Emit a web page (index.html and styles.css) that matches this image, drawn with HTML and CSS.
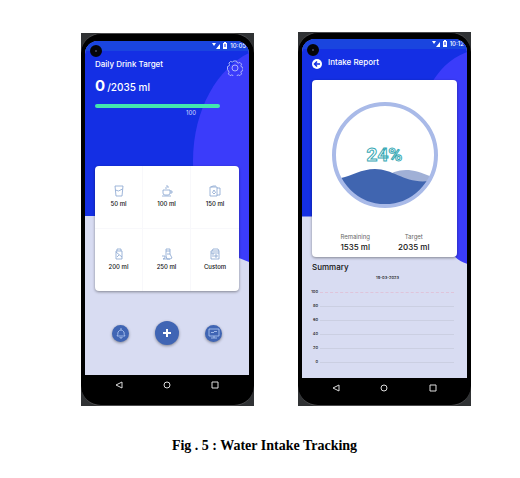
FILE: index.html
```html
<!DOCTYPE html>
<html lang="en">
<head>
<meta charset="utf-8">
<title>Water Intake Tracking</title>
<link rel="stylesheet" href="styles.css">
</head>
<body>
<figure class="figure">
  <div class="phones">
    <section class="phone phone-home">
      <div class="body">
        <span class="camera"></span>
        <div class="screen">
          <svg class="backdrop" viewBox="0 0 164 334" preserveAspectRatio="none" aria-hidden="true">
            <path d="M0 0H164V175H0Z" fill="#142fe4"/>
            <path d="M164 12C133 27 108 68 108 120C108 172 125 205 154 217L164 221Z" fill="#3b3cfa"/>
          </svg>
          <div class="status">
            <svg class="status-icons" viewBox="0 0 16 8" aria-hidden="true"><path d="M0 1H4L2 4ZM8 2V7H4ZM11 1h4v6h-4zM12 0h2v1h-2z" fill="#fff"/><path d="M13 2v3" stroke="#142fe4"/></svg>
            <span>10:05</span>
          </div>
          <header class="head">
            <h1 class="title">Daily Drink Target</h1>
            <button class="gear" aria-label="Settings">
              <svg viewBox="0 0 16 16" fill="none" stroke="#aab2fb"><path d="M6.500 1h3l.5 1.500 1.300.6 1.600-.7 1.700 1.700-.7 1.600.6 1.300 1.500.5v3l-1.500.5-.6 1.300.7 1.600-1.700 1.700-1.600-.7-1.300.6-.5 1.500h-3l-.5-1.500-1.300-.6-1.600.7-1.700-1.700.7-1.600-.6-1.300L.5 9.500v-3l1.500-.5.6-1.300-.7-1.600 1.700-1.700 1.600.7 1.300-.6z"/><circle cx="8" cy="8" r="3"/></svg>
            </button>
          </header>
          <p class="amount"><b>0</b>/2035 ml</p>
          <div class="track"></div>
          <p class="track-value">100</p>
          <div class="card drinks">
            <button class="drink"><svg viewBox="0 0 12 12"><path d="M2 1h8l-1 10H3zM2.500 5l3 1 4-2"/></svg>50 ml</button>
            <button class="drink"><svg viewBox="0 0 12 12"><path d="M2 5h7v3q0 2-2 2H4q-2 0-2-2zM9 6h2v2H9M1 11h9M5 4V2M7 3V1L5 1"/></svg>100 ml</button>
            <button class="drink"><svg viewBox="0 0 12 12"><path d="M1 2h7v9H1zM8 3h3v7H8M2 2l2-1h3M5 5q-3 3 0 4q3-1 0-4"/></svg>150 ml</button>
            <button class="drink"><svg viewBox="0 0 12 12"><path d="M3 3h6v8H3zM4 3V1h4v2M3 4l6 5M4 9l2-2"/></svg>200 ml</button>
            <button class="drink"><svg viewBox="0 0 12 12"><path d="M5 1h4v5l2 4-2 1H6L5 8zM5 3h4M1 8h3v2l-2 1M2 11h7M6 6h3"/></svg>250 ml</button>
            <button class="drink"><svg viewBox="0 0 12 12"><path d="M2 3h8v8H2zM3 3l1-2h5l1 2M4 5v4M2 5h8M6 7h2v2H6z"/></svg>Custom</button>
          </div>
          <div class="actions">
            <button class="round" aria-label="Reminders"><svg viewBox="0 0 12 12"><path d="M2 9q1-1 1-4q3-4 6 0q0 3 1 4zM6 3V1M5 10v1h2v-1"/></svg></button>
            <button class="round add" aria-label="Add drink"><svg viewBox="0 0 12 12"><path d="M6 2v8M2 6h8"/></svg></button>
            <button class="round" aria-label="Report"><svg viewBox="0 0 12 12"><path d="M1 2h10v7H1zM6 9v2M3 11h6M3 6l1-1 1 1 2-2 1 1 1-1"/></svg></button>
          </div>
        </div>
        <nav class="nav">
          <button aria-label="Back"><svg viewBox="0 0 8 8"><path d="M7 1v6L1 4z"/></svg></button>
          <button aria-label="Home"><svg viewBox="0 0 8 8"><circle cx="4" cy="4" r="3"/></svg></button>
          <button aria-label="Recent"><svg viewBox="0 0 8 8"><path d="M1 1h6v6H1z"/></svg></button>
        </nav>
      </div>
    </section>

    <section class="phone phone-report">
      <div class="body">
        <span class="camera"></span>
        <div class="screen">
          <svg class="backdrop" viewBox="0 0 164 338" preserveAspectRatio="none" aria-hidden="true">
            <path d="M0 0H164V177H0Z" fill="#142fe4"/>
            <path d="M164 13C145 20 136 33 130 42C100 90 100 180 152 217Q157 222 164 224Z" fill="#3b3cfa"/>
          </svg>
          <div class="status">
            <svg class="status-icons" viewBox="0 0 16 8" aria-hidden="true"><path d="M0 1H4L2 4ZM8 2V7H4ZM11 1h4v6h-4zM12 0h2v1h-2z" fill="#fff"/><path d="M13 2v3" stroke="#142fe4"/></svg>
            <span>10:12</span>
          </div>
          <header class="head">
            <button class="back" aria-label="Back"><svg viewBox="0 0 10 10"><circle cx="5" cy="5" r="5" fill="#fff"/><path d="M8 5H3M5 2.500L2.500 5L5 7.500" fill="none" stroke="#142fe4" stroke-width="1.500"/></svg></button>
            <h1 class="title">Intake Report</h1>
          </header>
          <div class="card report">
            <div class="gauge">
              <svg viewBox="0 0 106 106" aria-hidden="true">
                <path d="M52 76C64 66 80 65 99 75L96 80Q84 98 60 99Z" fill="#a0b0d6"/>
                <path d="M9 76C20 74 29 67 43 67C62 67 73 82 97 79C88 95 73 103 53 103C31 103 14 92 9 76Z" fill="#4065b0"/>
                <circle cx="53" cy="53" r="51" fill="none" stroke="#a9bae8" stroke-width="4"/>
              </svg>
              <strong class="percent">24%</strong>
            </div>
            <dl class="totals">
              <div><dt>Remaining</dt><dd>1535 ml</dd></div>
              <div><dt>Target</dt><dd>2035 ml</dd></div>
            </dl>
          </div>
          <h2 class="summary">Summary</h2>
          <p class="date">19-03-2023</p>
          <ul class="chart">
            <li class="limit"><span>100</span></li>
            <li><span>80</span></li>
            <li><span>60</span></li>
            <li><span>40</span></li>
            <li><span>20</span></li>
            <li><span>0</span></li>
          </ul>
        </div>
        <nav class="nav">
          <button aria-label="Back"><svg viewBox="0 0 8 8"><path d="M7 1v6L1 4z"/></svg></button>
          <button aria-label="Home"><svg viewBox="0 0 8 8"><circle cx="4" cy="4" r="3"/></svg></button>
          <button aria-label="Recent"><svg viewBox="0 0 8 8"><path d="M1 1h6v6H1z"/></svg></button>
        </nav>
      </div>
    </section>
  </div>
  <figcaption class="caption">Fig . 5 : Water Intake Tracking</figcaption>
</figure>
</body>
</html>
```
FILE: styles.css
```css
* { box-sizing: border-box; margin: 0; padding: 0; }
body { background: #fff; color: #111; }
button { border: 0; background: none; color: inherit; font: inherit; }
svg { display: block; }

.phones {
  display: flex;
  align-items: flex-start;
  gap: 44px;
  padding: 32px 49px 0 81px;
  font: 500 8px/12px Inter, "Liberation Sans", sans-serif;
}
.phone { flex: 1; min-width: 0; background: #303234; }
.phone-home { margin-top: 1px; }
.body {
  position: relative;
  padding: 7px 5px 0 4px;
  background: #000;
  border: 1px solid #4b4b4d;
  border-width: 1px 0;
  border-radius: 20px;
}
.phone-report .body { padding: 6px 4px 0; }
.screen {
  position: relative;
  z-index: 0;
  overflow: hidden;
  background: #d8dcf2;
  border-radius: 13px 13px 0 0;
}
.phone-home .screen { padding-bottom: 30px; }
.phone-report .screen { padding-bottom: 9px; }
.backdrop { position: absolute; z-index: -1; inset: 0; width: 100%; height: 100%; }
.camera {
  position: absolute;
  z-index: 1;
  top: 11px;
  left: 9px;
  width: 12px;
  height: 12px;
  border: 5px solid #050508;
  border-radius: 50%;
  background: #4b4b63;
}

.status {
  display: flex;
  justify-content: flex-end;
  align-items: center;
  gap: 2px;
  padding-right: 3px;
  background: #1a45df;
  color: #fff;
  font-size: 6px;
  line-height: 10px;
}
.status-icons { width: 16px; height: 8px; }

.head { display: flex; color: #fff; }
.title { font-size: 8px; font-weight: 500; line-height: 12px; }
.phone-home .head { justify-content: space-between; padding: 7px 6px 0 10px; }
.phone-report .head { gap: 6px; padding: 7px 10px 11px; }
.gear { height: 16px; margin-top: 2px; }
.gear svg { width: 16px; height: 16px; }
.back { padding-top: 3px; }
.back svg { width: 10px; height: 10px; }

.amount { padding: 0 10px; color: #fff; font-size: 10px; line-height: 20px; }
.amount b { margin-right: 2px; font-size: 15px; }
.track { height: 4px; margin: 7px 29px 0 10px; border-radius: 2px; background: #43e7ae; }
.track-value { padding-right: 53px; color: #d5dcff; font-size: 6px; font-weight: 400; line-height: 9px; text-align: right; }

.card { margin: 0 10px; border-radius: 4px; background: #fff; box-shadow: 0 1px 3px #0006; }
.drinks { display: grid; grid-template-columns: repeat(3, 1fr); margin-top: 49px; }
.drink {
  display: flex;
  flex-direction: column;
  align-items: center;
  gap: 2px;
  padding: 19px 0;
  font-size: 6px;
  line-height: 10px;
  border-right: 1px solid #f8f8fb;
}
.drink:nth-child(3n) { border-right: 0; }
.drink:nth-child(-n+3) { border-bottom: 1px solid #f8f8fb; }
.drink svg { width: 12px; height: 12px; fill: none; stroke: #86a3cf; stroke-width: 0.8; }

.actions { display: flex; justify-content: space-between; align-items: center; padding: 30px 27px 0; }
.round {
  display: grid;
  place-items: center;
  width: 17px;
  height: 17px;
  border-radius: 50%;
  background: #4065b4;
  box-shadow: 0 1px 3px #0006;
}
.round svg { width: 12px; height: 12px; fill: none; stroke: #b5ccf4; stroke-width: 0.8; }
.round.add { width: 24px; height: 24px; }
.round.add svg { stroke: #fff; stroke-width: 2; }

.nav { display: flex; justify-content: space-around; padding: 6px 10px 16px; }
.phone-report .nav { padding-bottom: 13px; }
.nav svg { width: 8px; height: 8px; fill: none; stroke: #ddd; }

.report { padding: 22px 14px 5px; }
.gauge { display: grid; place-items: center; }
.gauge > * { grid-area: 1 / 1; }
.gauge svg { width: 106px; }
.percent {
  color: #fff;
  font-family: Roboto, sans-serif;
  font-size: 19px;
  line-height: 24px;
  -webkit-text-stroke: 1px #38a9b5;
}
.totals { display: flex; padding-top: 24px; text-align: center; }
.totals div { flex: 1; }
.totals dt { color: #666; font-size: 6px; font-weight: 400; line-height: 10px; }
.totals dd { font-size: 8px; line-height: 10px; }

.summary { padding: 4px 10px 0; font-size: 8px; font-weight: 500; line-height: 12px; }
.date { padding-left: 6px; font-size: 4px; line-height: 10px; text-align: center; }
.chart { padding: 2px 13px 0 4px; list-style: none; font-size: 4px; line-height: 14px; }
.chart li { display: flex; align-items: center; gap: 2px; }
.chart span { width: 12px; text-align: right; }
.chart li::after { content: ""; flex: 1; border-top: 1px solid #cbcfe2; }
.chart .limit::after { border-top: 1px dashed #dfc4da; }

.caption {
  padding: 31px 0 16px 9px;
  color: #000;
  font: bold 14px/18px "Liberation Serif", serif;
  text-align: center;
}
```
